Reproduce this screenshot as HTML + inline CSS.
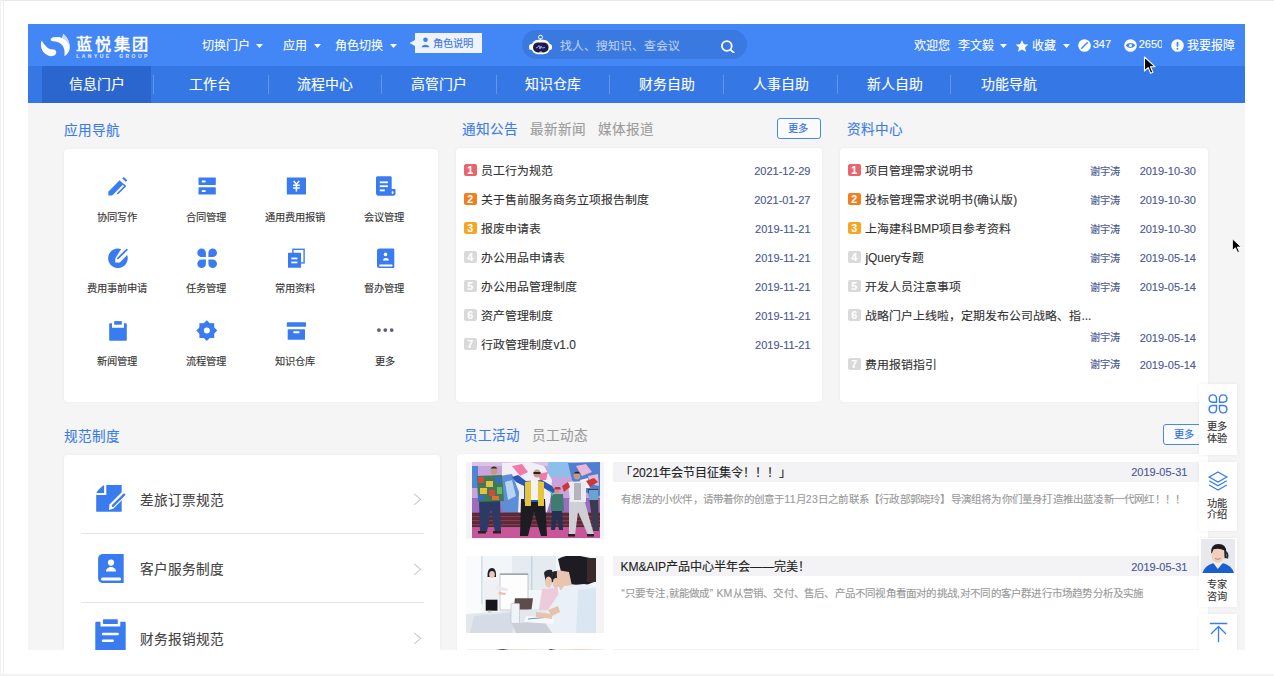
<!DOCTYPE html>
<html lang="zh-CN"><head><meta charset="utf-8"><title>蓝悦集团 门户</title>
<style>
*{margin:0;padding:0;box-sizing:border-box}
html,body{width:1274px;height:676px;overflow:hidden;background:#fff}
body{font-family:"Liberation Sans",sans-serif;position:relative}
.a{position:absolute;display:block}
.t{position:absolute;white-space:nowrap;-webkit-text-stroke:0.12px currentColor}
#app{position:absolute;left:28px;top:24px;width:1217px;height:626px;overflow:hidden;background:#f5f5f6}
#in{position:absolute;left:-28px;top:-24px;width:1274px;height:676px}
.card{position:absolute;background:#fff;border-radius:4px;box-shadow:0 0 3px rgba(0,0,0,0.05)}
</style></head>
<body>
<div class="a" style="left:0;top:0;width:1274px;height:1px;background:#e9e9e9"></div>
<div class="a" style="left:0;top:0;width:1px;height:676px;background:#f2f2f2"></div>
<div class="a" style="left:3px;top:0;width:1px;height:676px;background:#efefef"></div>
<div class="a" style="left:0;top:674px;width:1274px;height:2px;background:#f3f3f3"></div>
<div id="app"><div id="in">
<div class="a" style="left:28px;top:24px;width:1217.00px;height:42.00px;background:#4386f5"></div>
<div class="a" style="left:28px;top:66px;width:1217.00px;height:37.00px;background:#3578e5"></div>
<div class="a" style="left:42px;top:66px;width:109.00px;height:37.00px;background:#2b66cf"></div>
<div class="a" style="left:153px;top:75px;width:1.00px;height:19.00px;background:rgba(255,255,255,0.22)"></div>
<div class="a" style="left:267.6px;top:75px;width:1.00px;height:19.00px;background:rgba(255,255,255,0.22)"></div>
<div class="a" style="left:381px;top:75px;width:1.00px;height:19.00px;background:rgba(255,255,255,0.22)"></div>
<div class="a" style="left:495.5px;top:75px;width:1.00px;height:19.00px;background:rgba(255,255,255,0.22)"></div>
<div class="a" style="left:608.7px;top:75px;width:1.00px;height:19.00px;background:rgba(255,255,255,0.22)"></div>
<div class="a" style="left:723px;top:75px;width:1.00px;height:19.00px;background:rgba(255,255,255,0.22)"></div>
<div class="a" style="left:836.5px;top:75px;width:1.00px;height:19.00px;background:rgba(255,255,255,0.22)"></div>
<div class="a" style="left:950.3px;top:75px;width:1.00px;height:19.00px;background:rgba(255,255,255,0.22)"></div>
<svg class="a" style="left:36px;top:30px;" width="40" height="30" viewBox="0 0 40 30"><path fill="#fff" d="M5.8 10.4 C4.2 13.5 4.8 19.5 8 22.7 C10.5 25.2 14 26.5 16.5 26.1 C19 25.6 20.6 24 20.2 21.6 C19.8 20 18.5 19.6 16.9 19.6 C14 19.4 11 18.3 8.9 15.1 C7.5 13.5 6.4 12 5.8 10.4 Z"/><path fill="#fff" d="M14.7 9.8 C14.7 7.8 17 7.1 21.3 7.1 C23.5 7.1 25 7.5 26.2 8.2 L27.1 4 C30.5 6 33.5 11 33.8 16.9 C33.8 21 31.5 24.5 28.4 26 C29 22 28.5 18.5 26.5 15.5 C24 12.5 20.5 11.5 16.9 11.3 C15.5 11.2 14.7 10.7 14.7 9.8 Z"/><path fill="#c9d8f8" d="M27.1 4 C30.5 6 33.5 11 33.8 16.9 C32.5 13 30 9.8 26.2 8.2 Z"/></svg>
<span class="t" id="logo" style="left:76.19px;top:35.66px;font-size:16.2px;line-height:16.2px;color:#fff;font-weight:normal;letter-spacing:2.7px;-webkit-text-stroke:0.55px #fff">蓝悦集团</span>
<span class="t" id="logosub" style="left:76.25px;top:53.55px;font-size:5px;line-height:5px;color:rgba(255,255,255,0.75);font-weight:bold;letter-spacing:2.45px">LANYUE&nbsp;&nbsp;GROUP</span>
<span class="t" id="h1" style="left:202.40px;top:40.08px;font-size:12px;line-height:12px;color:#fff;font-weight:normal;">切换门户</span>
<svg class="a" style="left:256px;top:44px;" width="7" height="4" viewBox="0 0 7 4"><path d="M0 0 L7 0 L3.5 4 Z" fill="#fff"/></svg>
<span class="t" id="h2" style="left:283.40px;top:40.08px;font-size:12px;line-height:12px;color:#fff;font-weight:normal;">应用</span>
<svg class="a" style="left:314px;top:44px;" width="7" height="4" viewBox="0 0 7 4"><path d="M0 0 L7 0 L3.5 4 Z" fill="#fff"/></svg>
<span class="t" id="h3" style="left:335.40px;top:40.08px;font-size:12px;line-height:12px;color:#fff;font-weight:normal;">角色切换</span>
<svg class="a" style="left:390px;top:44px;" width="7" height="4" viewBox="0 0 7 4"><path d="M0 0 L7 0 L3.5 4 Z" fill="#fff"/></svg>
<svg class="a" style="left:409px;top:33px;" width="74" height="21" viewBox="0 0 74 21"><path d="M6 0 H73 V20 H6 V13 L0.5 10 L6 7 Z" fill="#eef3fd"/><circle cx="16.5" cy="6.8" r="2.3" fill="#3f7fe8"/><path d="M12.6 14.2 C12.8 10.8 20.2 10.8 20.4 14.2 Z" fill="#3f7fe8"/></svg>
<span class="t" id="h4" style="left:433.49px;top:39.30px;font-size:10.25px;line-height:10.25px;color:#3f78e0;font-weight:normal;">角色说明</span>
<div class="a" style="left:522px;top:30px;width:225.00px;height:29.00px;background:#3a79e0;border-radius:15px"></div>
<svg class="a" style="left:528px;top:34px;" width="26" height="22" viewBox="0 0 26 22"><circle cx="12.5" cy="3.2" r="2" fill="none" stroke="#fff" stroke-width="1"/><rect x="12" y="4.5" width="1" height="2" fill="#fff"/><rect x="1" y="10" width="5" height="6" rx="2.5" fill="#fff"/><rect x="19" y="10" width="5" height="6" rx="2.5" fill="#fff"/><rect x="3.3" y="5.7" width="19" height="14.6" rx="7" fill="#fff"/><rect x="5" y="8.4" width="15.6" height="10" rx="5" fill="#1c1a4e"/><path d="M10.8 18.6 Q12.8 16.6 14.8 18.6 Z" fill="#fff"/><path d="M8 14 L10 13 L11 11.5 L12 15 L13 12 L14 14 L17 13.5" stroke="#b8c4ff" stroke-width="0.8" fill="none"/></svg>
<span class="t" id="ph" style="left:560.40px;top:40.62px;font-size:11.9px;line-height:11.9px;color:rgba(255,255,255,0.62);font-weight:normal;">找人、搜知识、查会议</span>
<svg class="a" style="left:720px;top:40px;" width="17" height="13" viewBox="0 0 17 13"><circle cx="6.8" cy="6" r="4.9" fill="none" stroke="#fff" stroke-width="1.8"/><path d="M10.4 9.6 L13.8 12.6" stroke="#fff" stroke-width="1.9" stroke-linecap="round"/></svg>
<span class="t" id="h5" style="left:914.40px;top:39.88px;font-size:12px;line-height:12px;color:#fff;font-weight:normal;">欢迎您</span>
<span class="t" id="h6" style="left:958.40px;top:39.88px;font-size:12px;line-height:12px;color:#fff;font-weight:normal;">李文毅</span>
<svg class="a" style="left:1000px;top:44px;" width="7" height="4" viewBox="0 0 7 4"><path d="M0 0 L7 0 L3.5 4 Z" fill="#fff"/></svg>
<svg class="a" style="left:1015px;top:40px;" width="14" height="12" viewBox="0 0 14 12"><path d="M7 0.2 L8.9 4.2 L13.3 4.6 L10 7.5 L11 11.8 L7 9.6 L3 11.8 L4 7.5 L0.7 4.6 L5.1 4.2 Z" fill="#fff"/></svg>
<span class="t" id="h7" style="left:1032.40px;top:39.88px;font-size:12px;line-height:12px;color:#fff;font-weight:normal;">收藏</span>
<svg class="a" style="left:1062.5px;top:44px;" width="7" height="4" viewBox="0 0 7 4"><path d="M0 0 L7 0 L3.5 4 Z" fill="#fff"/></svg>
<svg class="a" style="left:1077.5px;top:38.5px;" width="13" height="13" viewBox="0 0 13 13"><circle cx="6.5" cy="6.5" r="6.3" fill="#fff"/><path d="M3.8 9.2 L9.2 3.8" stroke="#4386f5" stroke-width="1.5" stroke-linecap="round"/></svg>
<span class="t" id="h8" style="left:1092.75px;top:39.09px;font-size:11px;line-height:11px;color:#fff;font-weight:normal;">347</span>
<svg class="a" style="left:1123.5px;top:38.5px;" width="13" height="13" viewBox="0 0 13 13"><circle cx="6.5" cy="6.5" r="6.3" fill="#fff"/><path d="M1.8 6.5 C4 3.3 9 3.3 11.2 6.5 C9 9.7 4 9.7 1.8 6.5 Z" fill="#4386f5"/><circle cx="6.5" cy="6.5" r="1.5" fill="#fff"/></svg>
<div class="a" style="left:1137px;top:36px;width:24.5px;height:18px;overflow:hidden">
<span class="t" id="h9" style="left:1.75px;top:3.09px;font-size:11px;line-height:11px;color:#fff;font-weight:normal;">2650</span>
</div>
<svg class="a" style="left:1170.5px;top:38.5px;" width="13" height="13" viewBox="0 0 13 13"><circle cx="6.5" cy="6.5" r="6.3" fill="#fff"/><rect x="5.6" y="2.8" width="1.8" height="5" rx="0.9" fill="#4386f5"/><circle cx="6.5" cy="9.8" r="1" fill="#4386f5"/></svg>
<span class="t" id="h10" style="left:1187.40px;top:39.88px;font-size:12px;line-height:12px;color:#fff;font-weight:normal;">我要报障</span>
<span class="t" id="n0" style="left:68.51px;top:78.30px;font-size:13.9px;line-height:13.9px;color:#fff;font-weight:normal;">信息门户</span>
<span class="t" id="n1" style="left:189.46px;top:78.30px;font-size:13.9px;line-height:13.9px;color:#fff;font-weight:normal;">工作台</span>
<span class="t" id="n2" style="left:296.50px;top:78.30px;font-size:13.9px;line-height:13.9px;color:#fff;font-weight:normal;">流程中心</span>
<span class="t" id="n3" style="left:410.50px;top:78.30px;font-size:13.9px;line-height:13.9px;color:#fff;font-weight:normal;">高管门户</span>
<span class="t" id="n4" style="left:524.50px;top:78.30px;font-size:13.9px;line-height:13.9px;color:#fff;font-weight:normal;">知识仓库</span>
<span class="t" id="n5" style="left:638.50px;top:78.30px;font-size:13.9px;line-height:13.9px;color:#fff;font-weight:normal;">财务自助</span>
<span class="t" id="n6" style="left:752.50px;top:78.30px;font-size:13.9px;line-height:13.9px;color:#fff;font-weight:normal;">人事自助</span>
<span class="t" id="n7" style="left:866.50px;top:78.30px;font-size:13.9px;line-height:13.9px;color:#fff;font-weight:normal;">新人自助</span>
<span class="t" id="n8" style="left:980.50px;top:78.30px;font-size:13.9px;line-height:13.9px;color:#fff;font-weight:normal;">功能导航</span>
<span class="t" id="s1" style="left:64.32px;top:124.42px;font-size:13.6px;line-height:13.6px;color:#3a7cef;font-weight:normal;">应用导航</span>
<div class="card" style="left:64px;top:149px;width:374px;height:253px"></div>
<svg class="a" style="left:100px;top:170px;" width="36" height="32" viewBox="0 0 36 32"><path d="M8.3 21.7 L19.6 10.3 L23.6 14.1 L12.2 25.4 L8.3 25.4 Z" fill="#3a7cef"/><path d="M17.8 23.5 L25.2 16.1 L23.6 14.5" stroke="#3a7cef" stroke-width="1.6" fill="none" stroke-linecap="round" stroke-linejoin="round"/><path d="M22.3 8.5 L23.8 6.9 L27.3 10.3 L25.8 11.8 Z" fill="#3a7cef"/></svg>
<span class="t" id="g0" style="left:97.19px;top:212.80px;font-size:10.25px;line-height:10.25px;color:#333;font-weight:normal;">协同写作</span>
<svg class="a" style="left:190px;top:170px;" width="36" height="32" viewBox="0 0 36 32"><rect x="8.5" y="7.6" width="17.3" height="7.3" rx="0.6" fill="#3a7cef"/><rect x="8.5" y="17.3" width="17.3" height="7.3" rx="0.6" fill="#3a7cef"/><rect x="11.8" y="10.5" width="3.8" height="1.9" fill="#fff"/><rect x="11.8" y="20.1" width="3.8" height="1.9" fill="#fff"/></svg>
<span class="t" id="g1" style="left:186.49px;top:212.80px;font-size:10.25px;line-height:10.25px;color:#333;font-weight:normal;">合同管理</span>
<svg class="a" style="left:278px;top:170px;" width="36" height="32" viewBox="0 0 36 32"><rect x="8.8" y="7.6" width="19.2" height="17" rx="0.6" fill="#3a7cef"/><path d="M15.6 11 L18.4 14.2 L21.2 11 M15 15.2 H21.8 M15 18 H21.8 M18.4 14.2 V21.5" stroke="#fff" stroke-width="1.5" fill="none"/></svg>
<span class="t" id="g2" style="left:265.24px;top:212.80px;font-size:10.25px;line-height:10.25px;color:#333;font-weight:normal;">通用费用报销</span>
<svg class="a" style="left:368px;top:170px;" width="36" height="32" viewBox="0 0 36 32"><path d="M9.5 6.2 H22.5 A1.3 1.3 0 0 1 23.7 7.5 V19 H27.5 V23.6 A2.2 2.2 0 0 1 25.3 25.8 H11 A2.6 2.6 0 0 1 8 23.2 V7.7 A1.5 1.5 0 0 1 9.5 6.2 Z" fill="#3a7cef"/><rect x="11.8" y="11.4" width="8.1" height="1.8" fill="#fff"/><rect x="11.8" y="15.3" width="8.1" height="1.8" fill="#fff"/><rect x="11.8" y="19.5" width="5" height="1.8" fill="#fff"/><ellipse cx="24.6" cy="22.4" rx="0.9" ry="1.5" fill="#fff"/></svg>
<span class="t" id="g3" style="left:364.49px;top:212.80px;font-size:10.25px;line-height:10.25px;color:#333;font-weight:normal;">会议管理</span>
<svg class="a" style="left:100px;top:242px;" width="36" height="32" viewBox="0 0 36 32"><path d="M21.2 7.0 A9.8 9.8 0 1 0 27.2 13.0 L19.8 20.4 L15.2 20.6 L15.4 16.2 Z" fill="#3a7cef"/><path d="M17.9 16.4 L26.8 7.6" stroke="#3a7cef" stroke-width="1.8" stroke-linecap="round"/></svg>
<span class="t" id="g4" style="left:86.94px;top:284.30px;font-size:10.25px;line-height:10.25px;color:#333;font-weight:normal;">费用事前申请</span>
<svg class="a" style="left:190px;top:242px;" width="36" height="32" viewBox="0 0 36 32"><path d="M15.9 15 H11.6 A4.3 4.3 0 1 1 15.9 10.7 Z M18.4 15 V10.7 A4.3 4.3 0 1 1 22.7 15 Z M15.9 17.5 V21.8 A4.3 4.3 0 1 1 11.6 17.5 Z M18.4 17.5 H22.7 A4.3 4.3 0 1 1 18.4 21.8 Z" fill="#3a7cef"/></svg>
<span class="t" id="g5" style="left:186.49px;top:284.30px;font-size:10.25px;line-height:10.25px;color:#333;font-weight:normal;">任务管理</span>
<svg class="a" style="left:278px;top:242px;" width="36" height="32" viewBox="0 0 36 32"><rect x="14.9" y="7.3" width="11.2" height="13.6" fill="none" stroke="#3a7cef" stroke-width="1.4"/><rect x="10" y="10.7" width="13" height="15.1" rx="0.5" fill="#3a7cef"/><rect x="13.3" y="15.6" width="6.1" height="1.7" fill="#fff"/><rect x="13.3" y="19.6" width="6.1" height="1.7" fill="#fff"/></svg>
<span class="t" id="g6" style="left:275.49px;top:284.30px;font-size:10.25px;line-height:10.25px;color:#333;font-weight:normal;">常用资料</span>
<svg class="a" style="left:368px;top:242px;" width="36" height="32" viewBox="0 0 36 32"><path d="M11.5 6.4 H25.2 A1.1 1.1 0 0 1 26.3 7.5 V25 A1.1 1.1 0 0 1 25.2 26.1 H11.5 A2.5 2.5 0 0 1 9 23.6 V8.9 A2.5 2.5 0 0 1 11.5 6.4 Z" fill="#3a7cef"/><circle cx="17.5" cy="12.4" r="1.8" fill="#fff"/><path d="M14.9 18.5 C15 15.2 20.8 15.2 20.9 18.5 Z" fill="#fff"/><rect x="11.1" y="22.5" width="13.5" height="1.9" rx="0.9" fill="#fff"/></svg>
<span class="t" id="g7" style="left:364.49px;top:284.30px;font-size:10.25px;line-height:10.25px;color:#333;font-weight:normal;">督办管理</span>
<svg class="a" style="left:100px;top:314px;" width="36" height="32" viewBox="0 0 36 32"><path d="M9.2 10 A0.8 0.8 0 0 1 10 9.2 H12 V13.7 H24 V9.2 H26 A0.8 0.8 0 0 1 26.8 10 V26 A0.8 0.8 0 0 1 26 26.8 H10 A0.8 0.8 0 0 1 9.2 26 Z" fill="#3a7cef"/><rect x="14.2" y="7.1" width="7.6" height="3.6" fill="#3a7cef"/></svg>
<span class="t" id="g8" style="left:97.19px;top:357.30px;font-size:10.25px;line-height:10.25px;color:#333;font-weight:normal;">新闻管理</span>
<svg class="a" style="left:190px;top:314px;" width="36" height="32" viewBox="0 0 36 32"><g transform="translate(16.8 16.6)"><rect x="-7.4" y="-7.4" width="14.8" height="14.8" fill="#3a7cef"/><rect x="-7.4" y="-7.4" width="14.8" height="14.8" fill="#3a7cef" transform="rotate(45)"/><circle r="3" fill="#fff"/></g></svg>
<span class="t" id="g9" style="left:186.49px;top:357.30px;font-size:10.25px;line-height:10.25px;color:#333;font-weight:normal;">流程管理</span>
<svg class="a" style="left:278px;top:314px;" width="36" height="32" viewBox="0 0 36 32"><rect x="8.8" y="8.3" width="19.2" height="4.5" rx="0.5" fill="#3a7cef"/><rect x="9.7" y="15.2" width="17.3" height="10.6" rx="0.5" fill="#3a7cef"/><rect x="15.2" y="17.3" width="6.4" height="1.9" rx="0.9" fill="#fff"/></svg>
<span class="t" id="g10" style="left:275.49px;top:357.30px;font-size:10.25px;line-height:10.25px;color:#333;font-weight:normal;">知识仓库</span>
<svg class="a" style="left:368px;top:314px;" width="36" height="32" viewBox="0 0 36 32"><circle cx="10.9" cy="16.1" r="1.9" fill="#5b5e7e"/><circle cx="17.3" cy="16.1" r="1.9" fill="#5b5e7e"/><circle cx="23.7" cy="16.1" r="1.9" fill="#5b5e7e"/></svg>
<span class="t" id="g11" style="left:374.74px;top:357.30px;font-size:10.25px;line-height:10.25px;color:#333;font-weight:normal;">更多</span>
<span class="t" id="s2" style="left:462.32px;top:123.42px;font-size:13.6px;line-height:13.6px;color:#3a7cef;font-weight:normal;">通知公告</span>
<span class="t" id="s2b" style="left:530.32px;top:123.42px;font-size:13.6px;line-height:13.6px;color:#9b9b9b;font-weight:normal;">最新新闻</span>
<span class="t" id="s2c" style="left:598.32px;top:123.42px;font-size:13.6px;line-height:13.6px;color:#9b9b9b;font-weight:normal;">媒体报道</span>
<div class="a" style="left:777px;top:118px;width:44.00px;height:20.50px;border:1px solid #4a86ec;border-radius:3px;background:#fafbfd"></div>
<span class="t" id="more1" style="left:788.49px;top:124.30px;font-size:10.25px;line-height:10.25px;color:#2f6fe3;font-weight:normal;">更多</span>
<div class="card" style="left:456px;top:148px;width:366px;height:254px"></div>
<div class="a" style="left:464px;top:164px;width:12.50px;height:12.30px;background:#e9646f;border-radius:2px"></div>
<span class="t" style="left:464px;top:164.2px;width:12.5px;text-align:center;font-size:10.5px;line-height:12.5px;color:#fff;font-weight:bold">1</span>
<span class="t" id="nt0" style="left:481.40px;top:166.02px;font-size:11.9px;line-height:11.9px;color:#333;font-weight:normal;">员工行为规范</span>
<span class="t" id="nd0" style="right:463.5px;top:165.69px;font-size:11px;line-height:11px;color:#4a5894">2021-12-29</span>
<div class="a" style="left:464px;top:193px;width:12.50px;height:12.30px;background:#f27e22;border-radius:2px"></div>
<span class="t" style="left:464px;top:193.2px;width:12.5px;text-align:center;font-size:10.5px;line-height:12.5px;color:#fff;font-weight:bold">2</span>
<span class="t" id="nt1" style="left:481.40px;top:195.02px;font-size:11.9px;line-height:11.9px;color:#333;font-weight:normal;">关于售前服务商务立项报告制度</span>
<span class="t" id="nd1" style="right:463.5px;top:194.69px;font-size:11px;line-height:11px;color:#4a5894">2021-01-27</span>
<div class="a" style="left:464px;top:222px;width:12.50px;height:12.30px;background:#f5a623;border-radius:2px"></div>
<span class="t" style="left:464px;top:222.2px;width:12.5px;text-align:center;font-size:10.5px;line-height:12.5px;color:#fff;font-weight:bold">3</span>
<span class="t" id="nt2" style="left:481.40px;top:224.02px;font-size:11.9px;line-height:11.9px;color:#333;font-weight:normal;">报废申请表</span>
<span class="t" id="nd2" style="right:463.5px;top:223.69px;font-size:11px;line-height:11px;color:#4a5894">2019-11-21</span>
<div class="a" style="left:464px;top:251px;width:12.50px;height:12.30px;background:#d9d9d9;border-radius:2px"></div>
<span class="t" style="left:464px;top:251.2px;width:12.5px;text-align:center;font-size:10.5px;line-height:12.5px;color:#fff;font-weight:bold">4</span>
<span class="t" id="nt3" style="left:481.40px;top:253.02px;font-size:11.9px;line-height:11.9px;color:#333;font-weight:normal;">办公用品申请表</span>
<span class="t" id="nd3" style="right:463.5px;top:252.69px;font-size:11px;line-height:11px;color:#4a5894">2019-11-21</span>
<div class="a" style="left:464px;top:280px;width:12.50px;height:12.30px;background:#d9d9d9;border-radius:2px"></div>
<span class="t" style="left:464px;top:280.2px;width:12.5px;text-align:center;font-size:10.5px;line-height:12.5px;color:#fff;font-weight:bold">5</span>
<span class="t" id="nt4" style="left:481.40px;top:282.02px;font-size:11.9px;line-height:11.9px;color:#333;font-weight:normal;">办公用品管理制度</span>
<span class="t" id="nd4" style="right:463.5px;top:281.69px;font-size:11px;line-height:11px;color:#4a5894">2019-11-21</span>
<div class="a" style="left:464px;top:309px;width:12.50px;height:12.30px;background:#d9d9d9;border-radius:2px"></div>
<span class="t" style="left:464px;top:309.2px;width:12.5px;text-align:center;font-size:10.5px;line-height:12.5px;color:#fff;font-weight:bold">6</span>
<span class="t" id="nt5" style="left:481.40px;top:311.02px;font-size:11.9px;line-height:11.9px;color:#333;font-weight:normal;">资产管理制度</span>
<span class="t" id="nd5" style="right:463.5px;top:310.69px;font-size:11px;line-height:11px;color:#4a5894">2019-11-21</span>
<div class="a" style="left:464px;top:338px;width:12.50px;height:12.30px;background:#d9d9d9;border-radius:2px"></div>
<span class="t" style="left:464px;top:338.2px;width:12.5px;text-align:center;font-size:10.5px;line-height:12.5px;color:#fff;font-weight:bold">7</span>
<span class="t" id="nt6" style="left:481.40px;top:340.02px;font-size:11.9px;line-height:11.9px;color:#333;font-weight:normal;">行政管理制度v1.0</span>
<span class="t" id="nd6" style="right:463.5px;top:339.69px;font-size:11px;line-height:11px;color:#4a5894">2019-11-21</span>
<span class="t" id="s3" style="left:847.32px;top:123.42px;font-size:13.6px;line-height:13.6px;color:#3a7cef;font-weight:normal;">资料中心</span>
<div class="card" style="left:840px;top:148px;width:368px;height:254px"></div>
<div class="a" style="left:848px;top:164px;width:12.50px;height:12.30px;background:#e9646f;border-radius:2px"></div>
<span class="t" style="left:848px;top:164.2px;width:12.5px;text-align:center;font-size:10.5px;line-height:12.5px;color:#fff;font-weight:bold">1</span>
<span class="t" id="dt0" style="left:865.40px;top:166.02px;font-size:11.9px;line-height:11.9px;color:#333;font-weight:normal;">项目管理需求说明书</span>
<span class="t" id="da0" style="left:1090.29px;top:166.72px;font-size:10.2px;line-height:10.2px;color:#4a5894;font-weight:normal;">谢宇涛</span>
<span class="t" id="dd0" style="right:78.09999999999991px;top:166.39px;font-size:11px;line-height:11px;color:#4a5894">2019-10-30</span>
<div class="a" style="left:848px;top:193px;width:12.50px;height:12.30px;background:#f27e22;border-radius:2px"></div>
<span class="t" style="left:848px;top:193.2px;width:12.5px;text-align:center;font-size:10.5px;line-height:12.5px;color:#fff;font-weight:bold">2</span>
<span class="t" id="dt1" style="left:865.40px;top:195.02px;font-size:11.9px;line-height:11.9px;color:#333;font-weight:normal;">投标管理需求说明书(确认版)</span>
<span class="t" id="da1" style="left:1090.29px;top:195.72px;font-size:10.2px;line-height:10.2px;color:#4a5894;font-weight:normal;">谢宇涛</span>
<span class="t" id="dd1" style="right:78.09999999999991px;top:195.39px;font-size:11px;line-height:11px;color:#4a5894">2019-10-30</span>
<div class="a" style="left:848px;top:222px;width:12.50px;height:12.30px;background:#f5a623;border-radius:2px"></div>
<span class="t" style="left:848px;top:222.2px;width:12.5px;text-align:center;font-size:10.5px;line-height:12.5px;color:#fff;font-weight:bold">3</span>
<span class="t" id="dt2" style="left:865.40px;top:224.02px;font-size:11.9px;line-height:11.9px;color:#333;font-weight:normal;">上海建科BMP项目参考资料</span>
<span class="t" id="da2" style="left:1090.29px;top:224.72px;font-size:10.2px;line-height:10.2px;color:#4a5894;font-weight:normal;">谢宇涛</span>
<span class="t" id="dd2" style="right:78.09999999999991px;top:224.39px;font-size:11px;line-height:11px;color:#4a5894">2019-10-30</span>
<div class="a" style="left:848px;top:251px;width:12.50px;height:12.30px;background:#d9d9d9;border-radius:2px"></div>
<span class="t" style="left:848px;top:251.2px;width:12.5px;text-align:center;font-size:10.5px;line-height:12.5px;color:#fff;font-weight:bold">4</span>
<span class="t" id="dt3" style="left:865.40px;top:253.02px;font-size:11.9px;line-height:11.9px;color:#333;font-weight:normal;">jQuery专题</span>
<span class="t" id="da3" style="left:1090.29px;top:253.72px;font-size:10.2px;line-height:10.2px;color:#4a5894;font-weight:normal;">谢宇涛</span>
<span class="t" id="dd3" style="right:78.09999999999991px;top:253.39px;font-size:11px;line-height:11px;color:#4a5894">2019-05-14</span>
<div class="a" style="left:848px;top:280px;width:12.50px;height:12.30px;background:#d9d9d9;border-radius:2px"></div>
<span class="t" style="left:848px;top:280.2px;width:12.5px;text-align:center;font-size:10.5px;line-height:12.5px;color:#fff;font-weight:bold">5</span>
<span class="t" id="dt4" style="left:865.40px;top:282.02px;font-size:11.9px;line-height:11.9px;color:#333;font-weight:normal;">开发人员注意事项</span>
<span class="t" id="da4" style="left:1090.29px;top:282.72px;font-size:10.2px;line-height:10.2px;color:#4a5894;font-weight:normal;">谢宇涛</span>
<span class="t" id="dd4" style="right:78.09999999999991px;top:282.39px;font-size:11px;line-height:11px;color:#4a5894">2019-05-14</span>
<div class="a" style="left:848px;top:309px;width:12.50px;height:12.30px;background:#d9d9d9;border-radius:2px"></div>
<span class="t" style="left:848px;top:309.2px;width:12.5px;text-align:center;font-size:10.5px;line-height:12.5px;color:#fff;font-weight:bold">6</span>
<span class="t" id="dt5" style="left:865.40px;top:311.02px;font-size:11.9px;line-height:11.9px;color:#333;font-weight:normal;">战略门户上线啦，定期发布公司战略、指...</span>
<span class="t" id="da5" style="left:1090.29px;top:332.92px;font-size:10.2px;line-height:10.2px;color:#4a5894;font-weight:normal;">谢宇涛</span>
<span class="t" id="dd5" style="right:78.09999999999991px;top:332.59px;font-size:11px;line-height:11px;color:#4a5894">2019-05-14</span>
<div class="a" style="left:848px;top:357.7px;width:12.50px;height:12.30px;background:#d9d9d9;border-radius:2px"></div>
<span class="t" style="left:848px;top:357.9px;width:12.5px;text-align:center;font-size:10.5px;line-height:12.5px;color:#fff;font-weight:bold">7</span>
<span class="t" id="dt6" style="left:865.40px;top:359.72px;font-size:11.9px;line-height:11.9px;color:#333;font-weight:normal;">费用报销指引</span>
<span class="t" id="da6" style="left:1090.29px;top:360.42px;font-size:10.2px;line-height:10.2px;color:#4a5894;font-weight:normal;">谢宇涛</span>
<span class="t" id="dd6" style="right:78.09999999999991px;top:360.09px;font-size:11px;line-height:11px;color:#4a5894">2019-05-14</span>
<span class="t" id="s4" style="left:64.32px;top:430.42px;font-size:13.6px;line-height:13.6px;color:#3a7cef;font-weight:normal;">规范制度</span>
<div class="card" style="left:64px;top:455px;width:376px;height:260px"></div>
<div class="a" style="left:81px;top:532.5px;width:343.00px;height:1.00px;background:#e6e6e6"></div>
<div class="a" style="left:81px;top:602px;width:343.00px;height:1.00px;background:#e6e6e6"></div>
<svg class="a" style="left:90px;top:480px;" width="40" height="38" viewBox="0 0 40 38"><path d="M14 5 H31.7 V31.7 H6.2 V13 Z" fill="#3a7cef"/><path d="M6.5 11.8 L13.2 5.6 V11.8 Z" fill="#3a7cef"/><path d="M6.2 14 H15.2 V5" stroke="#fff" stroke-width="2.2" fill="none"/><path d="M19 30 L19.5 24.5 L33 11 L37 15 L23.5 28.5 Z" fill="#fff"/><path d="M22.8 25.9 L34.2 14.6" stroke="#3a7cef" stroke-width="2.2" stroke-linecap="round"/></svg>
<span class="t" id="r0" style="left:140.31px;top:493.88px;font-size:13.7px;line-height:13.7px;color:#444;font-weight:normal;">差旅订票规范</span>
<svg class="a" style="left:412.5px;top:493.0px;" width="10" height="13" viewBox="0 0 10 13"><path d="M1.2 0.8 L7.6 6.3 L1.2 11.8" fill="none" stroke="#c8c8c8" stroke-width="1.1"/></svg>
<svg class="a" style="left:90px;top:550px;" width="40" height="38" viewBox="0 0 40 38"><path d="M13 3.9 H33.7 V33.1 H13 A4.9 4.9 0 0 1 8.1 28.2 V8.8 A4.9 4.9 0 0 1 13 3.9 Z" fill="#3a7cef"/><circle cx="21" cy="12.6" r="3.1" fill="#fff"/><path d="M16 21.6 C16.2 15.6 25.8 15.6 26 21.6 Z" fill="#fff"/><rect x="11" y="27.5" width="20.2" height="3.1" rx="1.5" fill="#fff"/></svg>
<span class="t" id="r1" style="left:140.31px;top:563.38px;font-size:13.7px;line-height:13.7px;color:#444;font-weight:normal;">客户服务制度</span>
<svg class="a" style="left:412.5px;top:562.5px;" width="10" height="13" viewBox="0 0 10 13"><path d="M1.2 0.8 L7.6 6.3 L1.2 11.8" fill="none" stroke="#c8c8c8" stroke-width="1.1"/></svg>
<svg class="a" style="left:90px;top:612px;" width="40" height="45" viewBox="0 0 40 45"><path d="M5.3 10.8 A1 1 0 0 1 6.3 9.8 H10.5 V14.6 H30.3 V9.8 H34.7 A1 1 0 0 1 35.7 10.8 V45 H5.3 Z" fill="#3a7cef"/><rect x="12.9" y="7.3" width="14.9" height="4.8" rx="0.8" fill="#3a7cef"/><rect x="11.8" y="20.8" width="17.1" height="2.5" rx="1.2" fill="#fff"/><rect x="11.8" y="27.5" width="12.1" height="2.5" rx="1.2" fill="#fff"/></svg>
<span class="t" id="r2" style="left:140.31px;top:632.88px;font-size:13.7px;line-height:13.7px;color:#444;font-weight:normal;">财务报销规范</span>
<svg class="a" style="left:412.5px;top:632.0px;" width="10" height="13" viewBox="0 0 10 13"><path d="M1.2 0.8 L7.6 6.3 L1.2 11.8" fill="none" stroke="#c8c8c8" stroke-width="1.1"/></svg>
<span class="t" id="s5" style="left:464.32px;top:429.42px;font-size:13.6px;line-height:13.6px;color:#3a7cef;font-weight:normal;">员工活动</span>
<span class="t" id="s5b" style="left:532.32px;top:429.42px;font-size:13.6px;line-height:13.6px;color:#9b9b9b;font-weight:normal;">员工动态</span>
<div class="a" style="left:1162.5px;top:424px;width:47.50px;height:20.50px;border:1px solid #4a86ec;border-radius:3px;background:#fafbfd"></div>
<span class="t" id="more2" style="left:1174.49px;top:430.30px;font-size:10.25px;line-height:10.25px;color:#2f6fe3;font-weight:normal;">更多</span>
<div class="card" style="left:457px;top:454px;width:751px;height:260px"></div>
<div class="a" style="left:466px;top:461.5px;width:138.00px;height:77.00px;background:#f4f4f6"></div>
<div class="a" style="left:613px;top:461.5px;width:595.00px;height:20.00px;background:#f3f3f5"></div>
<span class="t" id="at0" style="left:620.39px;top:467.04px;font-size:12.1px;line-height:12.1px;color:#222;font-weight:normal;">「2021年会节目征集令！！！」</span>
<span class="t" id="ad0" style="right:86.5px;top:467.49px;font-size:11px;line-height:11px;color:#4a5894">2019-05-31</span>
<span class="t" id="ac0" style="left:621.18px;top:493.80px;font-size:10.5px;line-height:10.5px;color:#999;font-weight:normal;letter-spacing:0.2px">有想法的小伙伴，请带着你的创意于11月23日之前联系【行政部郭晓玲】导演组将为你们量身打造推出蓝凌新一代网红！！！</span>
<div class="a" style="left:466px;top:555.6px;width:138.00px;height:77.00px;background:#f4f4f6"></div>
<div class="a" style="left:613px;top:555.6px;width:595.00px;height:20.00px;background:#f3f3f5"></div>
<span class="t" id="at1" style="left:620.39px;top:561.14px;font-size:12.1px;line-height:12.1px;color:#222;font-weight:normal;">KM&amp;AIP产品中心半年会——完美！</span>
<span class="t" id="ad1" style="right:86.5px;top:561.59px;font-size:11px;line-height:11px;color:#4a5894">2019-05-31</span>
<span class="t" id="ac1" style="left:621.18px;top:587.90px;font-size:10.5px;line-height:10.5px;color:#999;font-weight:normal;letter-spacing:0.2px">“只要专注,就能做成” KM从营销、交付、售后、产品不同视角看面对的挑战,对不同的客户群进行市场趋势分析及实施</span>
<div class="a" style="left:466px;top:649px;width:138.00px;height:11.00px;background:#eef0f4"></div>
<div class="a" style="left:613px;top:649px;width:595.00px;height:11.00px;background:#f3f3f5"></div>
<svg class="a" style="left:471.5px;top:462px;overflow:hidden" width="128" height="76" viewBox="0 0 128 76">
<rect width="128" height="76" fill="#c8a4dc"/>
<rect x="0" y="0" width="128" height="4" fill="#d9c3e8"/>
<rect x="76" y="0" width="22" height="15" fill="#8cc0ea"/>
<rect x="0" y="36" width="128" height="14.5" fill="#9c6cc0"/>
<path d="M30 1 L58 0 L72 4 L80 18 L78 40 L74 53 L52 53 L36 50 L30 30 Z" fill="#f2eef8"/>
<path d="M40 4 L50 2 L56 10 L48 14 Z" fill="#f07aa8"/>
<path d="M66 12 L76 10 L74 18 L68 18 Z" fill="#f07aa8"/>
<path d="M28 14 L40 12 L47 30 L46 53 L32 53 L28 36 Z" fill="#5d8fd6"/>
<path d="M33 20 L40 18 L44 34 L36 38 Z" fill="#b8d4f4"/>
<path d="M96 1 L128 0 L128 34 L112 30 L100 18 Z" fill="#4f7fd2"/>
<path d="M104 4 L114 2 L120 10 L110 14 Z M116 14 L126 12 L127 24 L118 22 Z" fill="#e8b8d6"/>
<path d="M108 18 L116 16 L118 26 L110 26 Z" fill="#f4f4f8"/>
<rect x="0" y="4" width="6" height="22" fill="#4f84d8"/>
<rect x="0" y="50.5" width="128" height="15" fill="#5e2836"/>
<rect x="0" y="54" width="128" height="1.2" fill="#7c4050"/>
<rect x="0" y="58" width="128" height="1.2" fill="#7c4050"/>
<rect x="0" y="62" width="128" height="1.2" fill="#7c4050"/>
<rect x="0" y="65.5" width="128" height="10.5" fill="#c9559a"/>
<!-- man 1 -->
<path d="M7 39 L28 39 L29 70 L23 70 L19 48 L15 70 L8 70 Z" fill="#2e3a66"/>
<rect x="6" y="69" width="8" height="2.5" fill="#2a2222"/><rect x="21" y="69" width="8" height="2.5" fill="#2a2222"/>
<path d="M5 14 L30 13 L32 39 L6 40 Z" fill="#3f7a56"/>
<rect x="6" y="15" width="6" height="6" fill="#d44a3a"/><rect x="14" y="19" width="7" height="6" fill="#e8c040"/><rect x="23" y="15" width="6" height="6" fill="#3070c8"/>
<rect x="8" y="26" width="7" height="6" fill="#e8c040"/><rect x="17" y="28" width="6" height="6" fill="#d44a3a"/><rect x="25" y="25" width="5" height="7" fill="#68b860"/>
<rect x="6" y="33" width="6" height="5" fill="#3070c8"/><rect x="20" y="34" width="7" height="4" fill="#e07030"/>
<ellipse cx="22" cy="8.5" rx="3.4" ry="4" fill="#c49a80"/><path d="M18.5 6.5 Q22 2.5 25.5 6.5 Z" fill="#2a2a2a"/>
<!-- man 2 -->
<path d="M49 37 L73 37 L75 74 L69 74 L62 50 L56 74 L48 74 Z" fill="#1c1c22"/>
<path d="M40 15 L46 13 L54 19 L70 18 L80 24 L84 30 L80 31 L72 26 L72 40 L52 40 L52 24 L44 20 Z" fill="#2b58b6"/>
<path d="M53 20 L59 19 L59 44 L53 44 Z M66 19 L72 20 L72 44 L66 44 Z" fill="#e8c43c"/>
<rect x="59" y="18" width="7" height="20" fill="#f2f2f2"/>
<ellipse cx="65" cy="11.5" rx="3.5" ry="4" fill="#c49a80"/><rect x="61.5" y="10" width="7" height="2" fill="#222"/>
<!-- child -->
<path d="M80 48 L90 48 L91 68 L87 68 L85 56 L83 68 L79 68 Z" fill="#263052"/>
<path d="M79 32 L91 32 L92 49 L79 49 Z" fill="#3e7c70"/>
<path d="M77 28 L82 32 L80 34 Z" fill="#6ab0a0"/>
<circle cx="85" cy="29" r="2.6" fill="#c49a80"/><path d="M82 27.5 L89 27.5 L88 25 L83 25 Z" fill="#c83030"/>
<!-- man 3 -->
<path d="M97 37 L112 37 L122 73 L116 73 L106 50 L103 73 L97 73 Z" fill="#cfcfd6"/>
<rect x="96" y="72" width="7" height="2.5" fill="#222"/><rect x="115" y="72" width="7" height="2.5" fill="#222"/>
<path d="M96 20 L114 19 L114 40 L98 40 Z" fill="#ecebef"/>
<rect x="102" y="21" width="7" height="17" fill="#b4b4bc"/>
<path d="M90 24 L96 20 L98 25 L92 30 Z" fill="#cc3838"/>
<path d="M114 19 L122 16 L126 20 L118 25 Z" fill="#cc3838"/>
<ellipse cx="105" cy="13.5" rx="3.4" ry="4" fill="#c49a80"/><path d="M101.5 11.5 Q105 7.5 108.5 11.5 Z" fill="#222"/>
<path d="M116 27 L126 27 L127 69 L121 69 L119 50 Z" fill="#3c3a50"/>
<rect x="117" y="28" width="9" height="10" fill="#6aa2d0"/>
</svg>
<svg class="a" style="left:466px;top:555.6px;overflow:hidden" width="130" height="77" viewBox="0 0 130 77">
<rect width="130" height="77" fill="#f3f6f9"/>
<rect x="0" y="0" width="15" height="77" fill="#fafbfc"/>
<rect x="15" y="0" width="1.6" height="48" fill="#d3dee8"/>
<rect x="46" y="0" width="44" height="34" fill="#e4ecf2"/>
<rect x="65" y="0" width="1.5" height="34" fill="#c6d4e0"/>
<rect x="34" y="18" width="28" height="36" fill="#fdfdfd" stroke="#b9bec6" stroke-width="0.8"/>
<rect x="34" y="17.4" width="28" height="1.6" fill="#a0a6ae"/>
<path d="M21.5 21 Q21 12 26 12 Q30.5 12 30 21 Z" fill="#1e1e26"/>
<ellipse cx="26" cy="18.5" rx="2.8" ry="3.6" fill="#ecc8b6"/>
<path d="M17 24 L32 23.5 L33.5 44 L17.5 44 Z" fill="#f0f0f4"/>
<path d="M31 29 L42 33 L41.5 35.5 L30 33 Z" fill="#ece8ec"/>
<path d="M33 36 L40 37 L39 39 L32 38 Z" fill="#e6c0ac"/>
<rect x="19.7" y="43.7" width="11.8" height="11" fill="#16161e"/>
<rect x="22" y="54.7" width="3.5" height="5" fill="#e2c4b4"/>
<path d="M49 42.3 L67 42.3 L65.5 53.4 L47.5 53.4 Z" fill="#5c4c4a"/>
<path d="M0 58 L90 52 L90 77 L0 77 Z" fill="#e3e8ee"/>
<path d="M8 60 L50 56 L46 77 L4 77 Z" fill="#d5dce5"/>
<path d="M46 68 L90 62 L90 77 L50 77 Z" fill="#c9d0da"/>
<rect x="45" y="47.5" width="8.5" height="20" rx="1" fill="#eef4f8" stroke="#b4c0cc" stroke-width="0.6"/>
<path d="M78 17 Q80 13 86 14 L88 26 L80 27 Z" fill="#24242c"/>
<path d="M86 16 Q93 13 99 18 L99 30 L88 30 Z" fill="#22222a"/>
<ellipse cx="82.5" cy="26" rx="3.4" ry="5.5" fill="#ebc7b4"/>
<ellipse cx="90" cy="27" rx="3.2" ry="5.2" fill="#eac5b2"/>
<path d="M76 33 L92 32 L94 54 L73 54 Z" fill="#eccbdc"/>
<path d="M92 3 Q100 -2 114 0 L124 2 L128 26 L118 30 L104 28 L96 20 Z" fill="#1c1c22"/>
<rect x="121" y="2" width="9" height="24" fill="#3a2a2a"/>
<path d="M91 14 L103 16 L106 30 L100 36 L94 34 Q90 24 91 14 Z" fill="#e9c4b0"/>
<path d="M98 30 L118 28 L130 30 L130 77 L86 77 L80 68 L79 58 L86 48 L94 36 Z" fill="#eaf0f8"/>
<path d="M112 34 L130 32 L130 77 L110 77 Z" fill="#dbe6f3"/>
<path d="M60 60 L88 62 L87 68 L58 66 Z" fill="#f6f8fb"/>
<path d="M62 63 L84 61" stroke="#4a7ad0" stroke-width="0.8"/>
<path d="M70 56 L86 58 L86 63 L70 61 Z" fill="#e8c4ae"/>
<path d="M82 54 L92 50 L94 56 L86 60 Z" fill="#e6c2ac"/>
</svg>
<div class="a" style="left:470px;top:649px;width:130.00px;height:3.00px;background:linear-gradient(90deg,#f0eee8 0%,#eef 20%,#2a4a8a 25%,#e8dcc8 30%,#f0f0f0 60%,#2a4a8a 62%,#f2f0ea 66%,#e6d6b8 85%,#f0f0f0 100%)"></div>
<div class="a" style="left:1199px;top:384px;width:38.00px;height:71.00px;background:#fff;box-shadow:0 0 4px rgba(0,0,0,0.06)"></div>
<svg class="a" style="left:1207px;top:393px;" width="22" height="22" viewBox="0 0 22 22"><g fill="none" stroke="#3a7cef" stroke-width="1.4"><path d="M9.5 9.3 H5.5 A3.7 3.7 0 1 1 9.5 5.3 Z"/><path d="M12.5 9.3 V5.3 A3.7 3.7 0 1 1 16.5 9.3 Z"/><path d="M9.5 12.5 V16.5 A3.7 3.7 0 1 1 5.5 12.5 Z"/><path d="M12.5 12.5 H16.5 A3.7 3.7 0 1 1 12.5 16.5 Z"/></g></svg>
<span class="t" id="w1a" style="left:1207.49px;top:421.82px;font-size:10.2px;line-height:10.2px;color:#333;font-weight:normal;">更多</span>
<span class="t" id="w1b" style="left:1207.49px;top:434.42px;font-size:10.2px;line-height:10.2px;color:#333;font-weight:normal;">体验</span>
<div class="a" style="left:1199px;top:461.5px;width:38.00px;height:69.00px;background:#fff;box-shadow:0 0 4px rgba(0,0,0,0.06)"></div>
<svg class="a" style="left:1207px;top:469px;" width="22" height="25" viewBox="0 0 22 25"><g fill="none" stroke="#3a7cef" stroke-width="1.3" stroke-linejoin="miter"><path d="M11 3 L19.8 8 L11 13 L2.2 8 Z"/><path d="M2.2 11.8 L11 16.8 L19.8 11.8"/><path d="M2.2 16 L11 21 L19.8 16"/></g></svg>
<span class="t" id="w2a" style="left:1207.49px;top:498.82px;font-size:10.2px;line-height:10.2px;color:#333;font-weight:normal;">功能</span>
<span class="t" id="w2b" style="left:1207.49px;top:510.22px;font-size:10.2px;line-height:10.2px;color:#333;font-weight:normal;">介绍</span>
<div class="a" style="left:1199px;top:538px;width:38.00px;height:69.00px;background:#fff;box-shadow:0 0 4px rgba(0,0,0,0.06)"></div>
<svg class="a" style="left:1201px;top:539.3px;" width="34.3" height="34" viewBox="0 0 34.3 34"><rect width="34.3" height="34" fill="#e7e9ef"/><path d="M1.5 34 Q4 26.5 12 24.3 L17 25.5 L22.5 24.3 Q30.5 26.5 33 34 Z" fill="#1a5fd0"/><path d="M12.5 24.2 L16.8 30 L21.5 24.2 L19.8 21.5 L14.2 21.5 Z" fill="#f6efe8"/><ellipse cx="16.8" cy="15.8" rx="6.4" ry="7.9" fill="#f0cfbb"/><path d="M10.2 13.5 Q9.8 5 17.5 5 Q25.5 5.2 25.2 13 L25.8 19 L23.6 19.2 L23.2 11.5 Q19 8.6 12.5 10.2 L10.8 14.5 Z" fill="#1b1b20"/><path d="M24.2 12.5 Q27.8 14.5 26.2 19.5" stroke="#2a2a2e" stroke-width="1.6" fill="none"/><path d="M14 19.5 Q16.8 21.2 19.6 19.5" stroke="#c87070" stroke-width="0.9" fill="none"/></svg>
<span class="t" id="w3a" style="left:1207.49px;top:579.82px;font-size:10.2px;line-height:10.2px;color:#333;font-weight:normal;">专家</span>
<span class="t" id="w3b" style="left:1207.49px;top:592.22px;font-size:10.2px;line-height:10.2px;color:#333;font-weight:normal;">咨询</span>
<div class="a" style="left:1199px;top:614px;width:38.00px;height:46.00px;background:#fff;box-shadow:0 0 4px rgba(0,0,0,0.06)"></div>
<svg class="a" style="left:1208px;top:622px;" width="21" height="22" viewBox="0 0 21 22"><path d="M1.8 1.5 H19.3" stroke="#3a7cef" stroke-width="1.5"/><path d="M10.5 4.5 V20.3 M3 12 L10.5 4.5 L18 12" stroke="#3a7cef" stroke-width="1.3" fill="none"/></svg>
</div></div>
<svg class="a" style="left:1143.3px;top:56px" width="14" height="19" viewBox="0 0 13 19"><path d="M1 1 L1 15 L4.6 11.6 L7.2 17.2 L9.4 16.2 L6.9 10.8 L11.6 10.8 Z" fill="#000" stroke="#fff" stroke-width="1.1" stroke-linejoin="round"/></svg>
<svg class="a" style="left:1231px;top:238px" width="12" height="16" viewBox="0 0 13 19"><path d="M1 1 L1 15 L4.6 11.6 L7.2 17.2 L9.4 16.2 L6.9 10.8 L11.6 10.8 Z" fill="#000" stroke="#fff" stroke-width="1.1" stroke-linejoin="round"/></svg>
</body></html>
